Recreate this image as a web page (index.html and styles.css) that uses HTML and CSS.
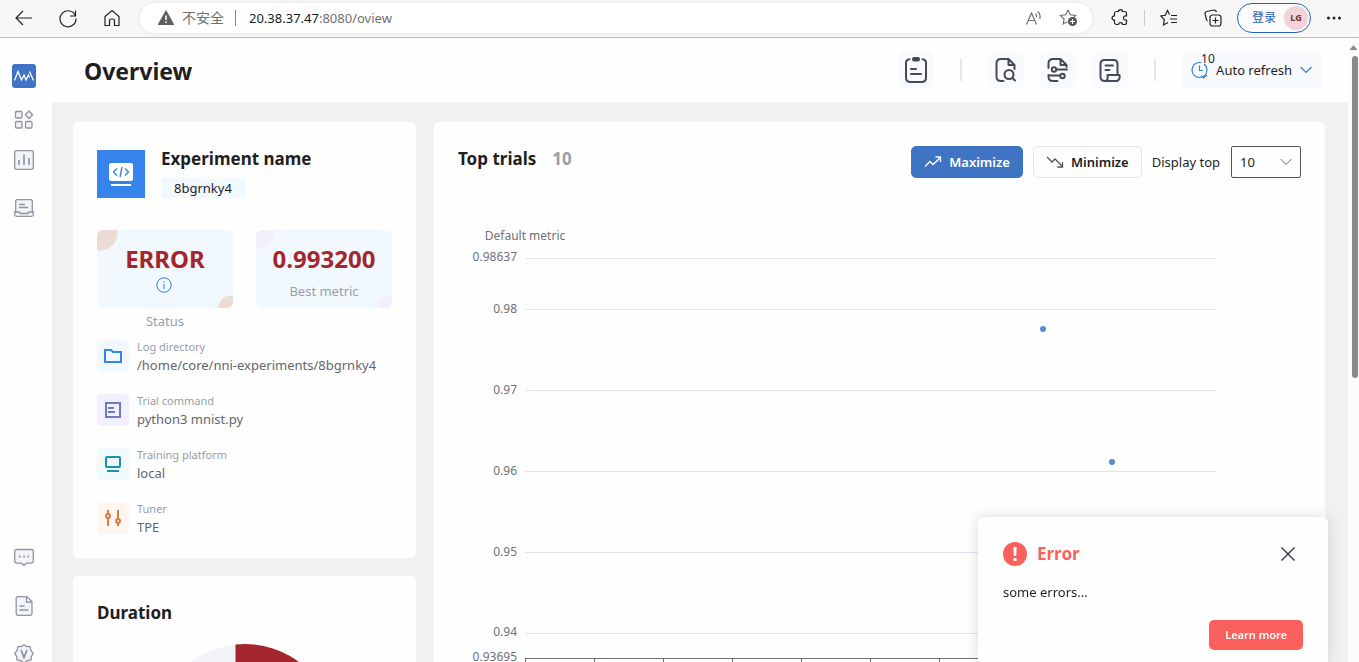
FILE: index.html
```html
<!DOCTYPE html>
<html lang="en">
<head>
<meta charset="utf-8">
<title>Overview</title>
<link rel="stylesheet" href="styles.css">
</head>
<body>
<div class="browser">
  <div class="browser-nav">
    <button class="plain" aria-label="Back"><svg width="20" height="20" viewBox="0 0 20 20"><path d="M18 10H2.500M9 3 2 10l7 7"/></svg></button>
    <button class="plain" aria-label="Reload"><svg width="20" height="20" viewBox="0 0 20 20"><path d="M17.500 8A8 8 0 1 0 18 10.500M17.500 2.500V8H12"/></svg></button>
    <button class="plain" aria-label="Home"><svg width="20" height="20" viewBox="0 0 20 20"><path d="M3 8.500 10 2.500l7 6V17.500H12.500V12.500a1.500 1.500 0 0 0-1.500-1.500H9a1.500 1.500 0 0 0-1.500 1.500V17.500H3Z"/></svg></button>
  </div>
  <div class="address">
    <svg class="warn" width="16" height="16" viewBox="0 0 16 16"><path d="M8 1 15.500 14.500H.5Z" fill="#5f5f5f" stroke="#5f5f5f" stroke-linejoin="round"/><path d="M8 5.500v4.500M8 11.500v1.500" stroke="#fff" stroke-width="1.600"/></svg>
    <span class="unsafe">不安全</span>
    <span class="address-sep"></span>
    <a class="url" href="#"><span class="host">20.38.37.47</span>:8080/oview</a>
    <button class="plain grey" aria-label="Read aloud"><svg width="18" height="18" viewBox="0 0 18 18"><path d="M1.500 15.500 6.500 4l5 11.500M3.300 11.500h6.500M10.500 4.500q1.500 1.500 1 4M12.800 2.500q3 3 2 7.500"/></svg></button>
    <button class="plain grey" aria-label="Add to favorites"><svg width="20" height="20" viewBox="0 0 20 20"><path d="m9 2 2.300 4.800 5.300.7-3.900 3.700M8.500 13.700 4.200 16l.9-5L1.300 7.500l5.300-.7L9 2"/><circle cx="13.500" cy="13.500" r="4.500" fill="#555" stroke="none"/><path d="M13.500 11v5M11 13.500h5" stroke="#fff"/></svg></button>
  </div>
  <div class="browser-tools">
    <button class="plain" aria-label="Extensions"><svg width="18" height="18" viewBox="0 0 18 18"><path d="M5.500 2.500h2a2 1.800 0 0 1 4 0h2a2 2 0 0 1 2 2V7q-3-.3-3 2t3 2v2.500a2 2 0 0 1-2 2h-2a2 1.800 0 0 0-4 0h-2a2 2 0 0 1-2-2V11.200q-2.500 0-2.500-2.200t2.500-2.200V4.500a2 2 0 0 1 2-2Z"/></svg></button>
    <span class="tool-sep"></span>
    <button class="plain" aria-label="Favorites"><svg width="18" height="18" viewBox="0 0 18 18"><path d="M9.500 5.500 7.500 1.500 5.300 6.300.8 7l3.500 3.700-.8 5.300L8 13.500M11 6.500h6M10 10h7M11 13.500h6"/></svg></button>
    <button class="plain" aria-label="Collections"><svg width="18" height="18" viewBox="0 0 18 18"><rect x="6" y="6" width="11" height="11" rx="2.500"/><path d="M11.500 8.500v6M8.500 11.500h6M3.500 12Q2.500 11.500 2.300 10L1 5Q.8 3 2.500 2.500L10 1q2 0 2.500 2"/></svg></button>
    <button class="login">登录<span class="avatar">LG</span></button>
    <button class="plain" aria-label="More"><svg width="16" height="16" viewBox="0 0 16 16"><g fill="#222" stroke="none"><circle cx="2.500" cy="8" r="1.500"/><circle cx="8" cy="8" r="1.500"/><circle cx="13.500" cy="8" r="1.500"/></g></svg></button>
  </div>
</div>

<div class="app">
  <nav class="sidebar">
    <a class="logo" href="#" aria-label="Home"><svg width="24" height="24" viewBox="0 0 24 24"><rect width="24" height="24" rx="3" fill="#3f74c4"/><path d="m2.500 16.500 3.500-9 3.500 8.500 2.500-5 2 5 2.500-5 1 2.500M17.500 7.500l4 9" fill="none" stroke="#fff" stroke-width="1.300"/></svg></a>
    <a href="#" aria-label="Overview"><svg width="20" height="20" viewBox="0 0 20 20"><rect x="1.500" y="1.500" width="6.500" height="6.500" rx="1"/><rect x="1.500" y="11.500" width="6.500" height="6.500" rx="1"/><rect x="11.500" y="11.500" width="6.500" height="6.500" rx="1"/><path d="m15 1 3.600 3.700L15 8.500l-3.600-3.800Z"/></svg></a>
    <a href="#" aria-label="Trials detail"><svg width="20" height="20" viewBox="0 0 20 20"><rect x=".7" y=".7" width="18.600" height="18.600" rx="2"/><path d="M5 15v-5M10 15V4.500M15 15V8" stroke-width="1.600"/></svg></a>
    <a class="last" href="#" aria-label="Experiments"><svg width="20" height="20" viewBox="0 0 20 20"><rect x="1.700" y="1.700" width="16.600" height="14" rx="1.500"/><path d="M5 6.500h6M5 9.500h9M.7 14h4.500l1 1.500h7.600l1-1.500h4.500v2.500a2 2 0 0 1-2 1.800H2.700a2 2 0 0 1-2-1.800Z"/></svg></a>
    <div class="side-bottom">
      <a href="#" aria-label="Feedback"><svg width="20" height="20" viewBox="0 0 20 20"><path d="M2.500 1.500h15a1.800 1.800 0 0 1 1.800 1.800v10a1.800 1.800 0 0 1-1.800 1.800h-5L10 17.500l-2.500-2.400h-5A1.800 1.800 0 0 1 .7 13.300v-10a1.800 1.800 0 0 1 1.800-1.800Z"/><path d="M5 8.500h1.500M9.300 8.500h1.500M13.500 8.500H15" stroke-width="1.800"/></svg></a>
      <a href="#" aria-label="Document"><svg width="20" height="20" viewBox="0 0 20 20"><path d="M4 .7h9l5 5v11.800a1.800 1.800 0 0 1-1.800 1.800H4a1.800 1.800 0 0 1-1.800-1.800v-15A1.800 1.800 0 0 1 4 .7ZM12.500 1v5H18M5.500 10h5M5.500 14h9"/></svg></a>
      <a href="#" aria-label="Version"><svg width="20" height="20" viewBox="0 0 20 20"><path stroke-linejoin="round" d="m10 .8 2.600 1.700 3.500.2.700 3.600 2.500 3.200-2 2.900-.3 3.600-3.800.6L10 19.200l-3.200-2.600-3.800-.6-.3-3.600-2-2.900 2.500-3.200.7-3.600 3.500-.2Z"/><path d="m7 6 3 7.500L13 6" stroke-width="1.800"/></svg></a>
    </div>
  </nav>

  <div class="page">
    <header class="topbar">
      <h1>Overview</h1>
      <button class="tool" aria-label="Summary"><svg width="24" height="28" viewBox="0 0 24 28"><path d="M5.500 3.200Q2 3.500 2 7v14.500q0 4.500 4.500 4.500h11q4.500 0 4.500-4.500V7q0-3.500-3.500-3.800M7 13h5M7 18h10"/><rect x="9" y="2" width="6" height="2.500" rx="1" fill="#474957"/></svg></button>
      <span class="divider"></span>
      <div class="tool-group">
        <button class="tool" aria-label="Search space"><svg width="24" height="28" viewBox="0 0 24 28"><path d="M9.500 25H7q-4.500 0-4.500-4.500v-13Q2.500 3 7 3h7.500l6 6v4M14.500 3.500V9H20"/><circle cx="15" cy="18.500" r="4.500"/><path d="m18.500 22 2.500 2.500"/></svg></button>
        <button class="tool" aria-label="Config"><svg width="24" height="28" viewBox="0 0 24 28"><path d="M11.500 25H7q-4.500 0-4.500-4.500V19M2.500 12V7.500Q2.500 3 7 3h7.500l6 6v2M14.500 3.500V9H20M10.500 13.500H21M3.500 19.500H14"/><circle cx="8" cy="13.500" r="2.200"/><circle cx="16.500" cy="20" r="2.200"/></svg></button>
        <button class="tool" aria-label="Logs"><svg width="24" height="28" viewBox="0 0 24 28"><path d="M7 25q-4.500 0-4.500-4V8q0-4 4-4h9q4 0 4 4v10M7.500 9.500h7.500M7.500 14h4M7 25h12q3.500-1.500 2.500-6H9.500q1 6-2.500 6"/></svg></button>
      </div>
      <span class="divider"></span>
      <button class="refresh">
        <span class="clock"><svg width="18" height="18" viewBox="0 0 18 18"><circle cx="8.500" cy="9" r="7.500" stroke-dasharray="37 3 8 0"/><path d="M8.500 4.500V9.500H12M10.500 14.500l2 2.500 3.500-3"/></svg><span class="count">10</span></span>
        Auto refresh
        <svg width="14" height="14" viewBox="0 0 14 14"><path d="m1.500 4 5.500 5.500L12.500 4"/></svg>
      </button>
    </header>

    <main class="content">
      <div class="left">
        <section class="card info">
          <div class="experiment">
            <svg width="48" height="48" viewBox="0 0 48 48"><rect width="48" height="48" fill="#3583eb"/><rect x="12" y="13" width="24" height="18" rx="2" fill="#fff"/><path d="M14 34h20v2H14Z" fill="#fff"/><path d="m20 18.500-3.500 3.500 3.500 3.500M28 18.500l3.500 3.500-3.500 3.500M25 17l-2 10" fill="none" stroke="#3583eb" stroke-width="1.400"/></svg>
            <div>
              <h2>Experiment name</h2>
              <span class="tag">8bgrnky4</span>
            </div>
          </div>
          <div class="stats">
            <div class="stat status">
              <strong>ERROR</strong>
              <button class="plain" aria-label="Error details"><svg width="16" height="16" viewBox="0 0 16 16"><circle cx="8" cy="8" r="7.200"/><path d="M8 7v5M8 4.300v1.300"/></svg></button>
              <span>Status</span>
            </div>
            <div class="stat metric">
              <strong>0.993200</strong>
              <span>Best metric</span>
            </div>
          </div>
          <dl class="facts">
            <div class="fact">
              <svg class="blue" width="32" height="32" viewBox="0 0 32 32"><path d="M8 10h6l2 2h8v10H8Z"/></svg>
              <div><dt>Log directory</dt><dd>/home/core/nni-experiments/8bgrnky4</dd></div>
            </div>
            <div class="fact">
              <svg class="violet" width="32" height="32" viewBox="0 0 32 32"><path d="M9 9h14v14H9ZM11 14h6M11 18h7"/></svg>
              <div><dt>Trial command</dt><dd>python3 mnist.py</dd></div>
            </div>
            <div class="fact">
              <svg class="teal" width="32" height="32" viewBox="0 0 32 32"><rect x="9" y="9" width="14" height="10" rx="1"/><path d="M10 23h12"/></svg>
              <div><dt>Training platform</dt><dd>local</dd></div>
            </div>
            <div class="fact">
              <svg class="orange" width="32" height="32" viewBox="0 0 32 32"><path d="M11 8v4M11 16v8M21 8v9M21 21v3"/><circle cx="11" cy="14" r="2"/><circle cx="21" cy="19" r="2"/></svg>
              <div><dt>Tuner</dt><dd>TPE</dd></div>
            </div>
          </dl>
        </section>
        <section class="card duration">
          <h2>Duration</h2>
          <svg width="180" height="180" viewBox="0 0 180 180"><circle cx="90" cy="90" r="90" fill="#f3f4f7"/><path d="M80.500 0.500A90 90 0 1 1 80.500 179.500Z" fill="#a4262c"/></svg>
        </section>
      </div>

      <section class="card trials">
        <div class="trials-head">
          <h2>Top trials</h2>
          <span class="total">10</span>
          <button class="btn primary"><svg width="18" height="14" viewBox="0 0 18 14"><path d="m1 11.500 5-5 3 3 7.500-7M11.500 2h5v5"/></svg>Maximize</button>
          <button class="btn"><svg width="18" height="14" viewBox="0 0 18 14"><path d="m1 2 5 5 3-3 7.500 7.500M11.500 12h5V7"/></svg>Minimize</button>
          <label for="top">Display top</label>
          <select id="top"><option>10</option><option>20</option><option>30</option></select>
        </div>
        <svg class="chart" viewBox="0 0 843 480">
          <g class="grid"><path d="M67 40.500H758M67 91.500H758M67 172.500H758M67 253.500H758M67 334.500H758M67 415.500H758"/></g>
          <path class="axis" d="M67 440.500H758M67.500 440v6M136.500 440v6M205.500 440v6M274.500 440v6M343.500 440v6M412.500 440v6M481.500 440v6M550.500 440v6M619.500 440v6M688.500 440v6M757.500 440v6"/>
          <text x="67" y="22" text-anchor="middle">Default metric</text>
          <g text-anchor="end">
            <text x="59" y="43">0.98637</text>
            <text x="59" y="95">0.98</text>
            <text x="59" y="176">0.97</text>
            <text x="59" y="257">0.96</text>
            <text x="59" y="338">0.95</text>
            <text x="59" y="418">0.94</text>
            <text x="59" y="443">0.93695</text>
          </g>
          <circle cx="585" cy="111" r="3"/><circle cx="654" cy="244" r="3"/>
        </svg>
      </section>
    </main>
  </div>
  <div class="scrollbar"><svg width="11" height="10" viewBox="0 0 11 10"><path d="m1.500 8 4-5 4 5Z" fill="#888"/></svg><span class="thumb"></span></div>
</div>

<div class="toast" role="alertdialog" aria-labelledby="toast-title">
  <div class="toast-head">
    <svg width="24" height="24" viewBox="0 0 24 24"><circle cx="12" cy="12" r="12" fill="#fb615c"/><path d="M10.300 5h3.400l-.5 9h-2.400ZM10.500 16h3v3h-3Z" fill="#fff"/></svg>
    <h2 id="toast-title">Error</h2>
    <button class="plain close" aria-label="Close"><svg width="16" height="16" viewBox="0 0 16 16"><path d="m1.500 1.500 13 13M14.500 1.500l-13 13"/></svg></button>
  </div>
  <p>some errors...</p>
  <button class="learn">Learn more</button>
</div>
</body>
</html>
```
FILE: styles.css
```css
* { box-sizing: border-box; }
body {
  margin: 0;
  height: 100vh;
  display: flex;
  flex-direction: column;
  overflow: hidden;
  background: #fefefe;
  color: #1f1f1f;
  font: 13px/20px "Noto Sans", "Noto Sans CJK SC", sans-serif;
}
button, select { font: inherit; color: inherit; }
h1, h2, p, dl, dd { margin: 0; }
a { color: inherit; text-decoration: none; }
svg { display: block; flex: none; }
.plain { display: flex; padding: 0; border: 0; background: none; }

.browser {
  flex: none;
  display: flex;
  align-items: center;
  height: 38px;
  padding: 0 17px 2px 0;
  background: #f7f7f7;
  border-bottom: 1px solid #bdbdbd;
}
.browser svg { fill: none; stroke: #222; stroke-width: 1.2; }
.browser-nav { display: flex; gap: 24px; padding: 0 18px 0 14px; }
.address {
  flex: 1;
  display: flex;
  align-items: center;
  height: 30px;
  padding: 0 13px 0 18px;
  border-radius: 15px;
  background: #fff;
  box-shadow: 0 0 4px #e4e4e4;
  color: #707070;
}
.browser .grey svg { stroke: #707070; }
.browser .warn { stroke: none; }
.unsafe { margin-left: 8px; font-size: 14px; }
.address-sep { width: 1px; height: 16px; margin: 0 13px 0 11px; background: #888; }
.url { flex: 1; font-size: 13px; }
.host { color: #1a1a1a; }
.address .plain + .plain { margin-left: 16px; }
.browser-tools { display: flex; align-items: center; gap: 15px; margin-left: 19px; }
.browser-tools .plain + .plain { margin-left: 11px; }
.tool-sep { width: 1px; height: 16px; background: #ccc; }
.login {
  display: flex;
  align-items: center;
  gap: 8px;
  height: 30px;
  padding: 0 2px 0 14px;
  border: 1px solid #2563b8;
  border-radius: 15px;
  background: #fbfbfb;
  color: #2563b8;
  font-size: 12px;
}
.avatar {
  width: 24px;
  border-radius: 50%;
  background: #f3d3da;
  color: #6b3636;
  font-size: 9px;
  font-weight: 700;
  line-height: 24px;
  text-align: center;
}

.app { flex: 1; min-height: 0; display: flex; }
.sidebar {
  flex: none;
  display: flex;
  flex-direction: column;
  align-items: center;
  gap: 20px;
  width: 52px;
  padding: 26px 4px 0 0;
}
.sidebar svg { fill: #f3f4f8; stroke: #9093a3; stroke-width: 1.3; }
.sidebar .logo { margin-bottom: 2px; }
.sidebar .logo svg { stroke: none; }
.sidebar .last { margin-top: 8px; }
.side-bottom { display: grid; gap: 28px; margin: auto 0 -2px; }
.page { flex: 1; min-width: 0; display: flex; flex-direction: column; }

.topbar {
  flex: none;
  display: flex;
  align-items: center;
  gap: 26px;
  height: 64px;
  padding: 0 26px 0 32px;
}
h1 { flex: 1; padding-top: 2px; font-size: 23px; line-height: 28px; }
.tool {
  display: grid;
  place-items: center;
  width: 36px;
  height: 36px;
  padding: 0;
  border: 0;
  border-radius: 6px;
  background: #f8fafd;
}
.tool svg { fill: none; stroke: #474957; stroke-width: 2; stroke-linejoin: round; stroke-linecap: round; }
.tool-group { display: flex; gap: 16px; }
.divider { width: 2px; height: 22px; background: #e4e8ec; }
.refresh {
  display: flex;
  align-items: center;
  gap: 7px;
  height: 36px;
  padding: 0 9px;
  border: 0;
  background: #f8fafd;
}
.refresh svg { fill: none; stroke: #2b7cd3; stroke-width: 1.1; }
.clock { position: relative; }
.count { position: absolute; left: 10px; top: -10px; font-size: 12px; line-height: 16px; }

.content {
  flex: 1;
  min-height: 0;
  display: flex;
  align-items: flex-start;
  gap: 18px;
  padding: 20px 23px 0 21px;
  overflow: hidden;
  background: #f1f1f1;
}
.left { flex: none; display: grid; gap: 18px; width: 343px; }
.card { border-radius: 5px; background: #fefefe; padding: 24px; }
h2 { font-size: 17px; line-height: 26px; }
.info { padding-top: 28px; }
.experiment { display: flex; gap: 16px; }
.experiment h2 { margin-top: -4px; }
.tag { display: inline-block; margin-top: 6px; padding: 0 13px; background: #f1f8fe; }
.stats { display: flex; justify-content: space-between; margin-top: 32px; }
.stat {
  width: 136px;
  height: 78px;
  padding-top: 13px;
  border-radius: 6px;
  text-align: center;
  color: #979fa9;
}
.stat strong { display: block; color: #a4262c; font-size: 24px; line-height: 32px; }
.stat .plain { margin: 2px auto 18px; padding-right: 2px; }
.stat svg { fill: none; stroke: #2b7cd3; }
.stat span { display: block; }
.metric span { margin-top: 6px; }
.status {
  background:
    radial-gradient(circle at 3px 3px, #eadbd5 17px, transparent 18px),
    radial-gradient(circle at calc(100% - 2px) 100%, #eadbd5 12px, transparent 13px),
    #f1f8fe;
}
.metric {
  background:
    radial-gradient(circle at 2px 2px, #f3eefb 16px, transparent 17px),
    radial-gradient(circle at calc(100% - 2px) 100%, #f3eefb 12px, transparent 13px),
    #f1f8fe;
}
.facts { display: grid; gap: 22px; margin-top: 32px; }
.fact { display: flex; gap: 8px; height: 32px; }
.fact svg { border-radius: 4px; fill: none; stroke-width: 2; }
.fact dt { margin-top: -3px; color: #979fa9; font-size: 11px; line-height: 20px; }
.fact dd { color: #65656d; line-height: 16px; }
.blue { background: #f1f8fe; stroke: #3583eb; }
.violet { background: #f3f0fd; stroke: #7079c4; }
.teal { background: #f0fafa; stroke: #1b93b0; }
.orange { background: #fff6ef; stroke: #db7b46; }
.duration svg { margin: 18px auto 0; }

.trials { flex: 1; min-width: 0; }
.trials-head { display: flex; align-items: center; height: 32px; }
.trials-head h2 { align-self: flex-start; }
.total { flex: 1; margin-left: 16px; align-self: flex-start; color: #979fa9; font-size: 17px; font-weight: 700; line-height: 26px; }
.btn {
  display: flex;
  align-items: center;
  gap: 7px;
  height: 32px;
  margin-right: 10px;
  padding: 0 12px;
  border: 1px solid #e2e3e7;
  border-radius: 5px;
  background: #fefefe;
  font-weight: 600;
}
.btn svg { fill: none; stroke: #555; stroke-width: 1.3; }
.primary { border-color: #3f74c4; background: #3f74c4; color: #fff; }
.primary svg { stroke: #fff; }
.trials-head select {
  width: 70px;
  height: 32px;
  margin-left: 11px;
  padding: 0 8px;
  border: 1px solid #555;
  border-radius: 2px;
  appearance: none;
  background: #fefefe url("data:image/svg+xml,%3Csvg xmlns='http://www.w3.org/2000/svg' width='12' height='8'%3E%3Cpath d='m.5 1 5.500 5.500L11.500 1' fill='none' stroke='%23666'/%3E%3C/svg%3E") no-repeat right 8px center;
}
.chart { width: 100%; margin-top: 40px; }
.chart text { fill: #6f7178; font-size: 12px; }
.chart path { fill: none; stroke: #dfe3f0; }
.chart .axis { stroke: #6e7079; }
.chart circle { fill: #5b8ad0; }

.scrollbar { flex: none; width: 11px; padding-top: 4px; background: #fcfcfc; }
.thumb { display: block; width: 6px; height: 322px; margin: 4px auto 0 4px; border-radius: 3px; background: #8a8a8a; }

.toast {
  position: fixed;
  right: 31px;
  bottom: 0;
  width: 350px;
  padding: 24px 25px 12px;
  border-radius: 6px 6px 0 0;
  background: #fefefe;
  box-shadow: 0 0 14px rgba(60, 60, 100, .18);
}
.toast-head { display: flex; align-items: center; gap: 10px; }
.toast h2 { flex: 1; color: #fb615c; }
.close { margin-right: 7px; }
.close svg { fill: none; stroke: #333344; stroke-width: 1.4; }
.toast p { margin: 15px 0 18px; }
.learn {
  display: block;
  height: 30px;
  margin-left: auto;
  padding: 0 16px;
  border: 0;
  border-radius: 5px;
  background: #fb615c;
  color: #fff;
  font-size: 11px;
  font-weight: 600;
}
```
